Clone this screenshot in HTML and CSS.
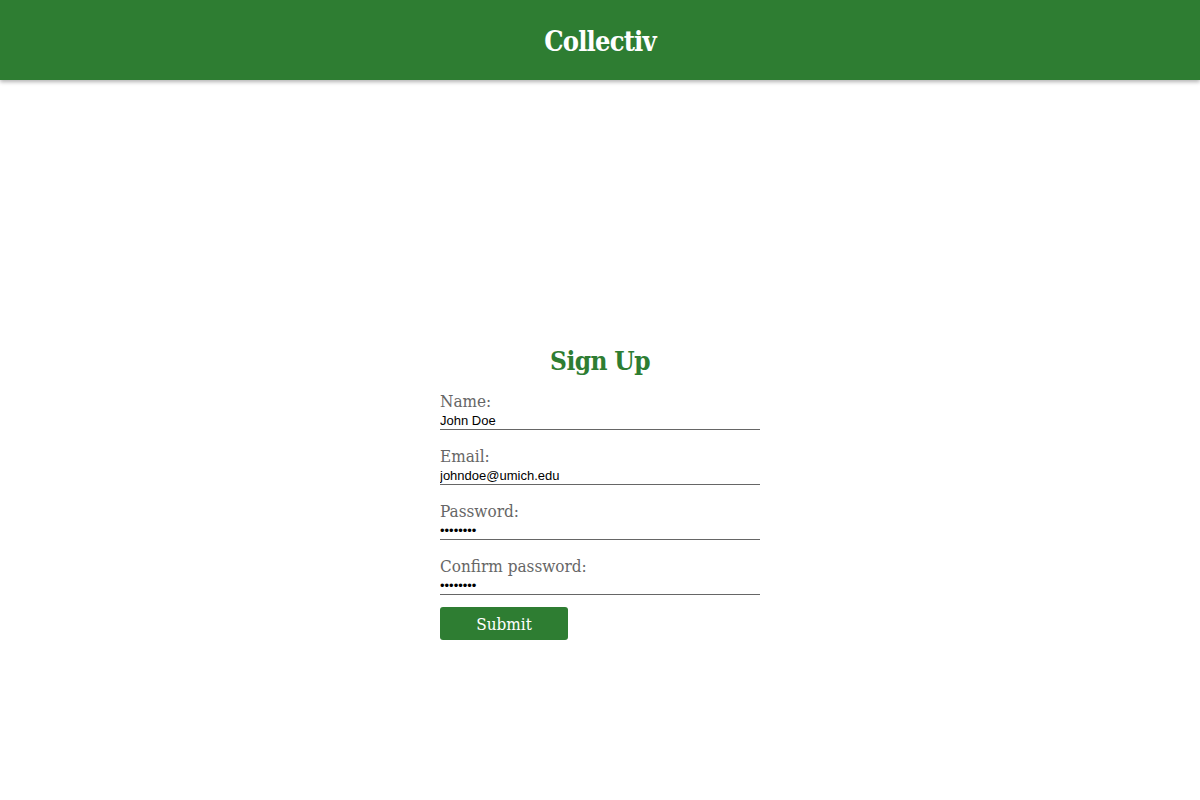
FILE: index.html
```html
<!DOCTYPE html>
<html>
<head>
<meta charset="utf-8">
<title>Collectiv</title>
<link rel="stylesheet" href="styles.css">
</head>
<body>
<header class="topbar">
  <h1 class="brand">Collectiv</h1>
</header>
<main class="page">
  <form class="signup">
    <h2 class="title">Sign Up</h2>
    <div class="field">
      <label class="label">Name:</label>
      <input class="input" type="text" value="John Doe">
    </div>
    <div class="field">
      <label class="label">Email:</label>
      <input class="input" type="text" value="johndoe@umich.edu">
    </div>
    <div class="field">
      <label class="label">Password:</label>
      <input class="input" type="password" value="password">
    </div>
    <div class="field">
      <label class="label">Confirm password:</label>
      <input class="input" type="password" value="password">
    </div>
    <button class="submit" type="button">Submit</button>
  </form>
</main>
</body>
</html>
```
FILE: styles.css
```css
* { box-sizing: border-box; }
html, body { margin: 0; padding: 0; background: #fff; }
body { font-family: "DejaVu Serif Condensed", "DejaVu Serif", serif; }
.topbar {
  height: 80px;
  background: #2e7d32;
  display: flex;
  align-items: center;
  justify-content: center;
  box-shadow: 0 2px 4px rgba(0,0,0,0.3);
}
.brand {
  margin: 0;
  color: #fff;
  font-size: 27px;
  font-weight: bold;
  letter-spacing: -0.8px;
  padding-top: 2px;
}
.page {
  display: flex;
  justify-content: center;
  padding-top: 264px;
}
.signup {
  width: 320px;
  display: flex;
  flex-direction: column;
}
.title {
  margin: 0 0 12px;
  text-align: center;
  color: #2e7d32;
  font-size: 26px;
  font-weight: bold;
  line-height: 34px;
  letter-spacing: -0.6px;
}
.field {
  display: flex;
  flex-direction: column;
  margin-bottom: 15px;
}
.label {
  color: #666;
  font-size: 17px;
  line-height: 22px;
}
.input {
  border: none;
  border-bottom: 1px solid #666;
  padding: 0;
  margin: 0;
  height: 18px;
  font-family: "Liberation Sans", Arial, sans-serif;
  font-size: 13px;
  color: #000;
  outline: none;
  background: transparent;
}
.submit {
  width: 128px;
  height: 33px;
  margin-top: -3px;
  background: #2e7d32;
  color: #fff;
  border: none;
  border-radius: 3px;
  font-family: "DejaVu Serif Condensed", "DejaVu Serif", serif;
  font-size: 17px;
  padding: 0;
}
```
